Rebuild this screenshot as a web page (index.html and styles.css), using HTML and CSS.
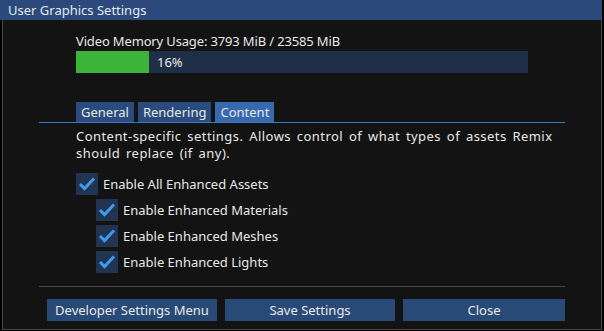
FILE: index.html
```html
<!DOCTYPE HTML>
<html>
  <head>
    <meta charset="utf-8">
    <title>User Graphics Settings</title>
    <link rel="stylesheet" href="styles.css">
  </head>
  <body>
    <div class="window">
      <div class="titlebar">User Graphics Settings</div>
      <div class="panel">
        <div class="memory">Video Memory Usage: 3793 MiB / 23585 MiB</div>
        <div class="progress">
          <div class="fill" style="width: 73px"></div>
          <span class="pct">16%</span>
        </div>
        <div class="tabs">
          <div class="tab">General</div>
          <div class="tab">Rendering</div>
          <div class="tab active">Content</div>
        </div>
        <p class="desc">
          Content-specific settings. Allows control of what types of assets Remix<br>
          should replace (if any).
        </p>
        <div class="checks">
          <div class="check">
            <span class="box"><svg width="22" height="22" viewBox="0 0 22 22"><polyline points="4,11 8.5,15.5 18,5.5"/></svg></span>
            Enable All Enhanced Assets
          </div>
          <div class="check sub">
            <span class="box"><svg width="22" height="22" viewBox="0 0 22 22"><polyline points="4,11 8.5,15.5 18,5.5"/></svg></span>
            Enable Enhanced Materials
          </div>
          <div class="check sub">
            <span class="box"><svg width="22" height="22" viewBox="0 0 22 22"><polyline points="4,11 8.5,15.5 18,5.5"/></svg></span>
            Enable Enhanced Meshes
          </div>
          <div class="check sub">
            <span class="box"><svg width="22" height="22" viewBox="0 0 22 22"><polyline points="4,11 8.5,15.5 18,5.5"/></svg></span>
            Enable Enhanced Lights
          </div>
        </div>
        <div class="separator"></div>
        <div class="buttons">
          <div class="button dev">Developer Settings Menu</div>
          <div class="button save">Save Settings</div>
          <div class="button close">Close</div>
        </div>
      </div>
    </div>
  </body>
</html>
```

FILE: styles.css
```css
body
{
    margin: 0;
    background-color: black;
    font-family: "Noto Sans", "DejaVu Sans", sans-serif;
    font-size: 13px;
    color: #e8e8e8;
}
.window { width: 602px; }
.titlebar
{
    height: 20px;
    line-height: 20px;
    padding-left: 8px;
    background-color: #2b4a7b;
    color: #e4e8ee;
}
.panel
{
    margin-left: 2px;
    height: 309px;
    background-color: #131313;
    border: 1px solid #474747;
    border-top: none;
    display: flex;
    flex-direction: column;
}
.memory
{
    margin: 11px 0 0 73px;
    height: 20px;
    line-height: 20px;
    letter-spacing: -0.15px;
}
.progress
{
    margin: 0 0 0 73px;
    width: 452px;
    height: 22px;
    background-color: #202f48;
    display: flex;
    align-items: center;
}
.progress .fill
{
    height: 22px;
    background-color: #3cb43a;
}
.progress .pct { margin-left: 8px; }
.tabs
{
    margin: 29px 0 0 36px;
    width: 526px;
    padding-left: 37px;
    box-sizing: border-box;
    display: flex;
    gap: 4px;
    border-bottom: 1px solid #3a78c8;
}
.tab
{
    height: 20px;
    line-height: 21px;
    padding: 0 5px;
    background-color: #2a4c7c;
}
.tab.active { background-color: #3669ad; }
.desc
{
    margin: 5px 0 0 73px;
    width: 492px;
    line-height: 17px;
    word-spacing: 2px;
    letter-spacing: 0.45px;
}
.checks
{
    margin: 11px 0 0 73px;
    display: flex;
    flex-direction: column;
    gap: 4px;
}
.check
{
    display: flex;
    align-items: center;
    gap: 5px;
    height: 22px;
}
.check.sub { margin-left: 20px; }
.box
{
    width: 22px;
    height: 22px;
    background-color: #213552;
}
.box svg { display: block; }
.box polyline
{
    fill: none;
    stroke: #3e9cf0;
    stroke-width: 3;
}
.separator
{
    margin: 13px 0 0 36px;
    width: 526px;
    height: 1px;
    background-color: #474747;
}
.buttons
{
    margin: 12px 0 0 44px;
    display: flex;
    gap: 8px;
}
.button
{
    height: 22px;
    line-height: 22px;
    text-align: center;
    background-color: #284a76;
}
.button.dev, .button.save { width: 170px; }
.button.close { width: 162px; }
```
